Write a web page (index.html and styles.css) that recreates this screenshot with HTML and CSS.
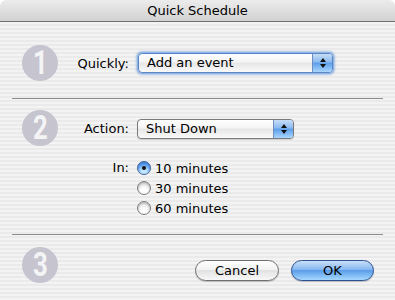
FILE: index.html
```html
<!DOCTYPE html>
<html lang="en">
<head>
  <meta charset="UTF-8" />
  <title>Quick Schedule</title>
  <link rel="stylesheet" href="styles.css">
</head>
<body>
  <div class="window">
    <div class="titlebar">Quick Schedule</div>

    <div class="content">
      <!-- Step 1 -->
      <section class="step step-one">
        <div class="badge"><span>1</span></div>
        <label class="label">Quickly:</label>
        <div class="popup popup-wide focused">
          <span class="popup-text">Add an event</span>
          <span class="popup-arrows"><i class="up"></i><i class="down"></i></span>
        </div>
      </section>

      <hr class="sep" />

      <!-- Step 2 -->
      <section class="step step-two">
        <div class="badge"><span>2</span></div>
        <label class="label">Action:</label>
        <div class="popup popup-narrow">
          <span class="popup-text">Shut Down</span>
          <span class="popup-arrows"><i class="up"></i><i class="down"></i></span>
        </div>

        <label class="label label-in">In:</label>
        <div class="radios">
          <div class="radio-row"><span class="radio checked"></span>10 minutes</div>
          <div class="radio-row"><span class="radio"></span>30 minutes</div>
          <div class="radio-row"><span class="radio"></span>60 minutes</div>
        </div>
      </section>

      <hr class="sep" />

      <!-- Step 3 -->
      <section class="step step-three">
        <div class="badge"><span>3</span></div>
        <div class="buttons">
          <button class="btn">Cancel</button>
          <button class="btn btn-default">OK</button>
        </div>
      </section>
    </div>
  </div>
</body>
</html>
```

FILE: styles.css
```css
* {
  box-sizing: border-box;
  margin: 0;
  padding: 0;
}

body {
  background: #fff;
  font-family: "DejaVu Sans", sans-serif;
  font-size: 13px;
  color: #000;
}

.window {
  width: 395px;
  height: 300px;
  border-radius: 6px 6px 0 0;
  overflow: hidden;
  display: flex;
  flex-direction: column;
}

/* Title bar */
.titlebar {
  height: 22px;
  flex: none;
  border-bottom: 1px solid #6f6f6f;
  background: linear-gradient(#ececec, #d2d2d2);
  text-align: center;
  line-height: 21px;
}

/* Pinstripe body */
.content {
  flex: 1;
  background: repeating-linear-gradient(#f3f3f3 0 2px, #eaeaea 2px 4px);
}

/* badge | label | control */
.step {
  display: grid;
  grid-template-columns: 36px 63px auto;
  column-gap: 8px;
  padding-left: 22px;
}
.step .label {
  grid-column: 2;
  text-align: right;
  align-self: center;
}

.badge {
  grid-column: 1;
  width: 36px;
  height: 36px;
  border-radius: 50%;
  background: #c6c4cf;
  color: #f4f4f6;
  font-family: Roboto, "Liberation Sans", sans-serif;
  font-weight: bold;
  font-size: 33px;
  line-height: 36px;
  text-align: center;
}
.badge span {
  display: inline-block;
  transform: scaleX(0.78);
}

.step-one {
  padding-top: 23px;
  padding-bottom: 17px;
  align-items: center;
}

.sep {
  border: 0;
  height: 1px;
  background: #8c8c8c;
  margin: 0 12px;
}

.step-two {
  padding-top: 11px;
  padding-bottom: 16px;
  grid-template-rows: 36px auto;
  row-gap: 12px;
}
.step-two .badge {
  grid-row: 1;
}
.step-two .popup {
  align-self: center;
  margin-top: 2px;
}
.step-two .label-in {
  grid-row: 2;
  align-self: start;
  line-height: 20px;
}
.radios {
  grid-column: 3;
  grid-row: 2;
}
.radio-row {
  height: 20px;
  display: flex;
  align-items: center;
  gap: 4px;
}

/* Aqua popup menu */
.popup {
  height: 20px;
  display: flex;
  align-items: stretch;
  border: 1px solid #7a7a7a;
  border-radius: 4px;
  background: linear-gradient(#ffffff 0%, #f4f4f4 45%, #e6e6e6 50%, #fafafa 100%);
  box-shadow: 0 1px 1px rgba(0,0,0,0.15);
}
.popup-wide {
  width: 195px;
  margin-left: 1px;
}
.popup-narrow {
  width: 157px;
}
.popup.focused {
  border-color: #5a86c4;
  box-shadow: 0 0 0 1px #8fb4e6, 0 0 2px 2px rgba(120,160,220,0.6);
}
.popup-text {
  flex: 1;
  padding-left: 8px;
  line-height: 18px;
}
.popup-arrows {
  width: 20px;
  border-left: 1px solid #6e8fbf;
  border-radius: 0 3px 3px 0;
  background: linear-gradient(#c7ddf6 0%, #8bbaf0 45%, #5b9ee9 50%, #a9d6ff 100%);
  display: flex;
  flex-direction: column;
  align-items: center;
  justify-content: center;
  gap: 2px;
}
.popup-arrows i {
  width: 0;
  height: 0;
  border-left: 3px solid transparent;
  border-right: 3px solid transparent;
}
.popup-arrows .up {
  border-bottom: 4px solid #111;
}
.popup-arrows .down {
  border-top: 4px solid #111;
}

/* Aqua radio */
.radio {
  width: 14px;
  height: 14px;
  border-radius: 50%;
  border: 1px solid #7d7d7d;
  background: radial-gradient(circle at 50% 80%, #ffffff 0 30%, #e4e4e4 70%), #eee;
  box-shadow: inset 0 1px 2px rgba(0,0,0,0.25);
  position: relative;
  flex: none;
}
.radio.checked {
  border-color: #375d99;
  background: radial-gradient(circle at 50% 85%, #bfe4ff 0 25%, #4f93e6 70%, #2f6cc4 100%);
  box-shadow: none;
}
.radio.checked::after {
  content: "";
  position: absolute;
  left: 4px;
  top: 4px;
  width: 4px;
  height: 4px;
  border-radius: 50%;
  background: #111;
}

/* Step 3 */
.step-three {
  padding-top: 12px;
  grid-template-columns: 36px 1fr;
  padding-right: 21px;
}
.buttons {
  grid-column: 2;
  display: flex;
  justify-content: flex-end;
  gap: 12px;
  margin-top: 13px;
}
.btn {
  font: inherit;
  height: 21px;
  width: 84px;
  border-radius: 11px;
  border: 1px solid #6f6f6f;
  background: linear-gradient(#ffffff 0%, #f2f2f2 45%, #e2e2e2 50%, #f8f8f8 100%);
  color: #000;
  box-shadow: 0 1px 1px rgba(0,0,0,0.2);
}
.btn-default {
  width: 83px;
  border-color: #2c4f8f;
  background: linear-gradient(#c9e0fa 0%, #86b8f1 45%, #5a9de9 50%, #a6d8ff 100%);
}
```
